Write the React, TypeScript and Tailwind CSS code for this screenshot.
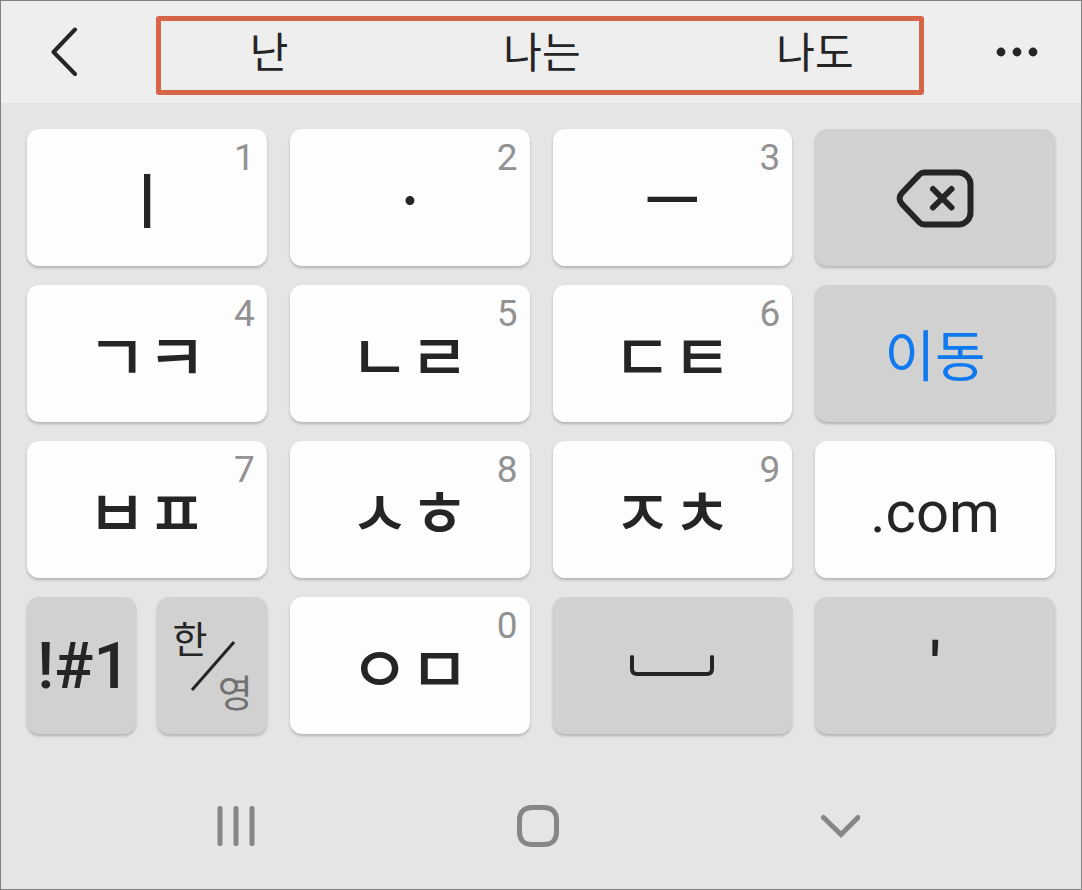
import type { ReactNode } from "react";

const suggestions = ["난", "나는", "나도"];

type KeyProps = {
  children: ReactNode;
  label?: string;
  digit?: string;
  tone?: "light" | "dark";
};

function Key({ children, label, digit, tone = "light" }: KeyProps) {
  const surface = tone === "light" ? "bg-[#fdfdfd]" : "bg-[#d1d1d1]";
  return (
    <button
      type="button"
      aria-label={label}
      className={`relative flex h-[137px] w-full min-w-0 items-center justify-center rounded-xl shadow-[0_2px_3px_rgba(0,0,0,0.22)] ${surface}`}
    >
      {children}
      {digit && (
        <span className="absolute top-[9px] right-3 font-[Roboto,sans-serif] text-[37px] leading-10 text-[#929292]">
          {digit}
        </span>
      )}
    </button>
  );
}

function Consonants({ children }: { children: string }) {
  return (
    <span className="pb-0.5 text-[65px] leading-[64px] font-medium whitespace-nowrap">{children}</span>
  );
}

function Vowel({ children }: { children: string }) {
  return (
    <span className="pb-0.5 text-[60px] leading-[64px] font-medium whitespace-nowrap">{children}</span>
  );
}

function BackIcon() {
  return (
    <svg width="28" height="50" viewBox="0 0 28 50" fill="none" stroke="currentColor" strokeWidth="4" strokeLinecap="round" strokeLinejoin="round">
      <path d="M25 2.500 3.500 25 25 47" />
    </svg>
  );
}

function MoreIcon() {
  return (
    <svg width="42" height="10" viewBox="0 0 42 10" fill="currentColor">
      <circle cx="5" cy="5" r="4.4" />
      <circle cx="21" cy="5" r="4.4" />
      <circle cx="37" cy="5" r="4.4" />
    </svg>
  );
}

function BackspaceIcon() {
  return (
    <svg width="78" height="60" viewBox="0 0 78 60" fill="none" stroke="currentColor" strokeWidth="6" strokeLinecap="round" strokeLinejoin="round">
      <path d="M28.500 4.500H62A12 12 0 0 1 74.500 16.500V44.500A12 12 0 0 1 62 56.500H28.500C26.500 56.500 25 56 23.500 54.500L6 36C2.800 32.500 2.800 28.500 6 25L23.500 6.500C25 5 26.500 4.500 28.500 4.500Z" />
      <path d="M37 21 55.500 39.500M55.500 21 37 39.500" />
    </svg>
  );
}

function SpaceIcon() {
  return (
    <svg width="84" height="22" viewBox="0 0 84 22" fill="none" stroke="currentColor" strokeWidth="4" strokeLinecap="round">
      <path d="M2 2V14Q2 19 7 19H77Q82 19 82 14V2" />
    </svg>
  );
}

function RecentsIcon() {
  return (
    <svg width="38" height="40" viewBox="0 0 38 40" fill="currentColor">
      <rect x="0.500" y="0" width="5" height="40" rx="2" />
      <rect x="16.500" y="0" width="5" height="40" rx="2" />
      <rect x="32.500" y="0" width="5" height="40" rx="2" />
    </svg>
  );
}

function HomeIcon() {
  return (
    <svg width="42" height="42" viewBox="0 0 42 42" fill="none" stroke="currentColor" strokeWidth="5">
      <path d="M15 2.500H27C35 2.500 39.500 7 39.500 15V27C39.500 35 35 39.500 27 39.500H15C7 39.500 2.500 35 2.500 27V15C2.500 7 7 2.500 15 2.500Z" />
    </svg>
  );
}

function HideIcon() {
  return (
    <svg width="40" height="24" viewBox="0 0 40 24" fill="none" stroke="currentColor" strokeWidth="5" strokeLinecap="round">
      <path d="M3.500 3.500 21 20.500 38 3.500" />
    </svg>
  );
}

export default function App() {
  return (
    <div className="flex min-h-screen flex-col border border-[#808080] bg-[#e5e5e5] font-['Noto_Sans_CJK_KR',sans-serif] text-[#252525]">
      <header className="flex h-[102px] items-center bg-[#eeeeee]">
        <button type="button" aria-label="뒤로" className="flex h-full w-[155px] shrink-0 items-center pl-[49px]">
          <BackIcon />
        </button>
        <div className="mt-[15px] flex h-[79px] min-w-0 flex-1 items-start justify-between self-start rounded-[3px] border-[5px] border-[#d66446] pr-16 pl-[68px]">
          {suggestions.map((word) => (
            <button
              key={word}
              type="button"
              className="w-20 text-[42px] leading-[58px] whitespace-nowrap"
            >
              {word}
            </button>
          ))}
        </div>
        <button type="button" aria-label="더보기" className="flex h-full w-[157px] shrink-0 items-center justify-end pr-[43px]">
          <MoreIcon />
        </button>
      </header>

      <main className="grid grid-cols-4 gap-x-[23px] gap-y-[19px] px-[26px] pt-[26px]">
        <Key digit="1"><Vowel>ㅣ</Vowel></Key>
        <Key digit="2"><Vowel>ㆍ</Vowel></Key>
        <Key digit="3"><Vowel>ㅡ</Vowel></Key>
        <Key tone="dark" label="지우기"><BackspaceIcon /></Key>

        <Key digit="4"><Consonants>ㄱㅋ</Consonants></Key>
        <Key digit="5"><Consonants>ㄴㄹ</Consonants></Key>
        <Key digit="6"><Consonants>ㄷㅌ</Consonants></Key>
        <Key tone="dark">
          <span className="pb-1 text-[55px] leading-[64px] text-[#0f7af0]">이동</span>
        </Key>

        <Key digit="7"><Consonants>ㅂㅍ</Consonants></Key>
        <Key digit="8"><Consonants>ㅅㅎ</Consonants></Key>
        <Key digit="9"><Consonants>ㅈㅊ</Consonants></Key>
        <Key>
          <span className="pt-1 font-[Roboto,sans-serif] text-[58px] leading-[64px]">.com</span>
        </Key>

        <div className="grid grid-cols-2 gap-x-[21px]">
          <Key tone="dark">
            <span className="pl-1 font-[Roboto,sans-serif] text-[65px] leading-[64px] font-medium">!#1</span>
          </Key>
          <Key tone="dark">
            <span className="flex w-full flex-col pr-[14px] pb-1 pl-[15px]">
              <span className="self-start text-[38px] leading-[54px]">한</span>
              <span className="self-end text-[38px] leading-[54px] text-[#707070]">영</span>
            </span>
            <svg className="absolute" width="46" height="50" viewBox="0 0 46 50" stroke="currentColor" strokeWidth="3">
              <path d="M45 1 3 49" />
            </svg>
          </Key>
        </div>
        <Key digit="0"><Consonants>ㅇㅁ</Consonants></Key>
        <Key tone="dark" label="스페이스"><SpaceIcon /></Key>
        <Key tone="dark">
          <span className="font-[Roboto,sans-serif] text-[65px] leading-[64px] font-medium">'</span>
        </Key>
      </main>

      <nav className="mt-[60px] grid grid-cols-3 pr-[90px] pl-[84px] text-[#868686]">
        <button type="button" aria-label="최근 앱" className="flex h-16 items-center justify-center"><RecentsIcon /></button>
        <button type="button" aria-label="홈" className="flex h-16 items-center justify-center"><HomeIcon /></button>
        <button type="button" aria-label="키보드 숨기기" className="flex h-16 items-center justify-center"><HideIcon /></button>
      </nav>
    </div>
  );
}
